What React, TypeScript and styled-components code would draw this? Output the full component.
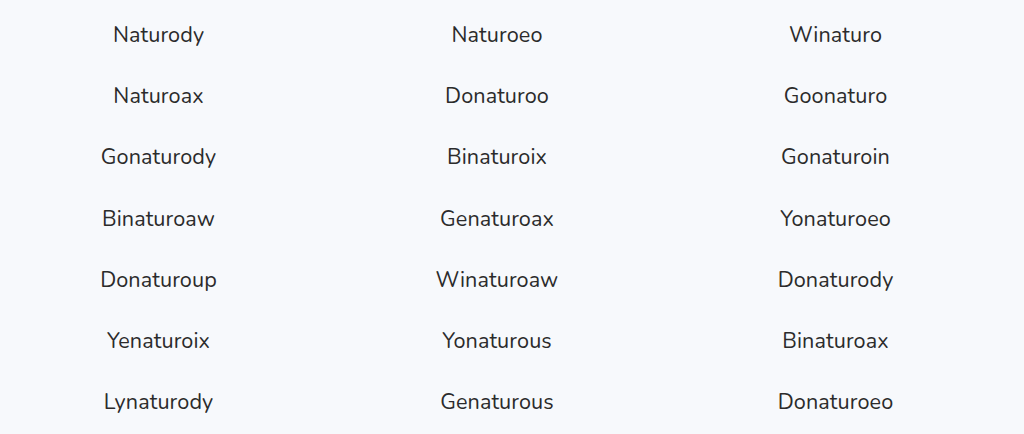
import React from "react";
import styled, { createGlobalStyle } from "styled-components";

const Global = createGlobalStyle`
  html, body { margin: 0; padding: 0; background: #f7f9fc; }
  body { font-family: "Nunito", "Lato", "Open Sans", sans-serif; }
`;

const Grid = styled.div`
  display: grid;
  grid-template-columns: repeat(3, 317px);
  column-gap: 21.5px;
  grid-auto-rows: 61.2px;
  padding-top: 4.5px;
  width: 1024px;
  height: 434px;
  box-sizing: border-box;
  background: #f7f9fc;
`;

const Cell = styled.div`
  display: flex;
  align-items: center;
  justify-content: center;
  font-size: 21.6px;
  color: #2b2b2b;
  letter-spacing: 0.1px;
`;

const items = [
  ["Naturody", "Naturoeo", "Winaturo"],
  ["Naturoax", "Donaturoo", "Goonaturo"],
  ["Gonaturody", "Binaturoix", "Gonaturoin"],
  ["Binaturoaw", "Genaturoax", "Yonaturoeo"],
  ["Donaturoup", "Winaturoaw", "Donaturody"],
  ["Yenaturoix", "Yonaturous", "Binaturoax"],
  ["Lynaturody", "Genaturous", "Donaturoeo"],
];

export default function App() {
  return (
    <>
      <Global />
      <Grid>
        {items.flat().map((t, i) => (
          <Cell key={i}>{t}</Cell>
        ))}
      </Grid>
    </>
  );
}
